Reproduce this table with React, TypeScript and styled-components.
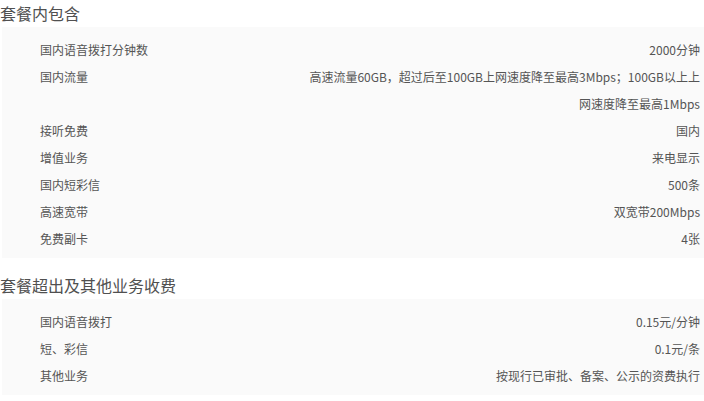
import React from "react";
import styled, { createGlobalStyle } from "styled-components";

const Global = createGlobalStyle`
  html, body { margin: 0; padding: 0; background: #fff; }
  body { font-family: "Noto Sans CJK SC", "Noto Sans", sans-serif; }
`;

const Page = styled.div`
  width: 704px;
  display: flex;
  flex-direction: column;
`;

const Heading = styled.h2<{ $first?: boolean }>`
  margin: ${(p) => (p.$first ? "0" : "14px")} 0 0 0;
  height: 27px;
  line-height: 27px;
  font-size: 16px;
  font-weight: normal;
  color: #505050;
  white-space: nowrap;
`;

const Panel = styled.div`
  margin-left: 2px;
  background: #fafafa;
  padding: 9px 4px 6px 38px;
  display: flex;
  flex-direction: column;
`;

const Row = styled.div`
  display: flex;
  justify-content: space-between;
  align-items: flex-start;
  font-size: 12px;
  line-height: 27px;
  color: #555;
`;

const Label = styled.span`
  flex: none;
  white-space: nowrap;
`;

const Value = styled.span`
  flex: 1;
  text-align: right;
  white-space: nowrap;
`;

const included: [string, React.ReactNode][] = [
  ["国内语音拨打分钟数", "2000分钟"],
  [
    "国内流量",
    <>
      高速流量60GB，超过后至100GB上网速度降至最高3Mbps；100GB以上上
      <br />
      网速度降至最高1Mbps
    </>,
  ],
  ["接听免费", "国内"],
  ["增值业务", "来电显示"],
  ["国内短彩信", "500条"],
  ["高速宽带", "双宽带200Mbps"],
  ["免费副卡", "4张"],
];

const extra: [string, string][] = [
  ["国内语音拨打", "0.15元/分钟"],
  ["短、彩信", "0.1元/条"],
  ["其他业务", "按现行已审批、备案、公示的资费执行"],
];

export default function App() {
  return (
    <Page>
      <Global />
      <Heading $first>套餐内包含</Heading>
      <Panel>
        {included.map(([l, v]) => (
          <Row key={l}>
            <Label>{l}</Label>
            <Value>{v}</Value>
          </Row>
        ))}
      </Panel>
      <Heading>套餐超出及其他业务收费</Heading>
      <Panel>
        {extra.map(([l, v]) => (
          <Row key={l}>
            <Label>{l}</Label>
            <Value>{v}</Value>
          </Row>
        ))}
      </Panel>
    </Page>
  );
}
